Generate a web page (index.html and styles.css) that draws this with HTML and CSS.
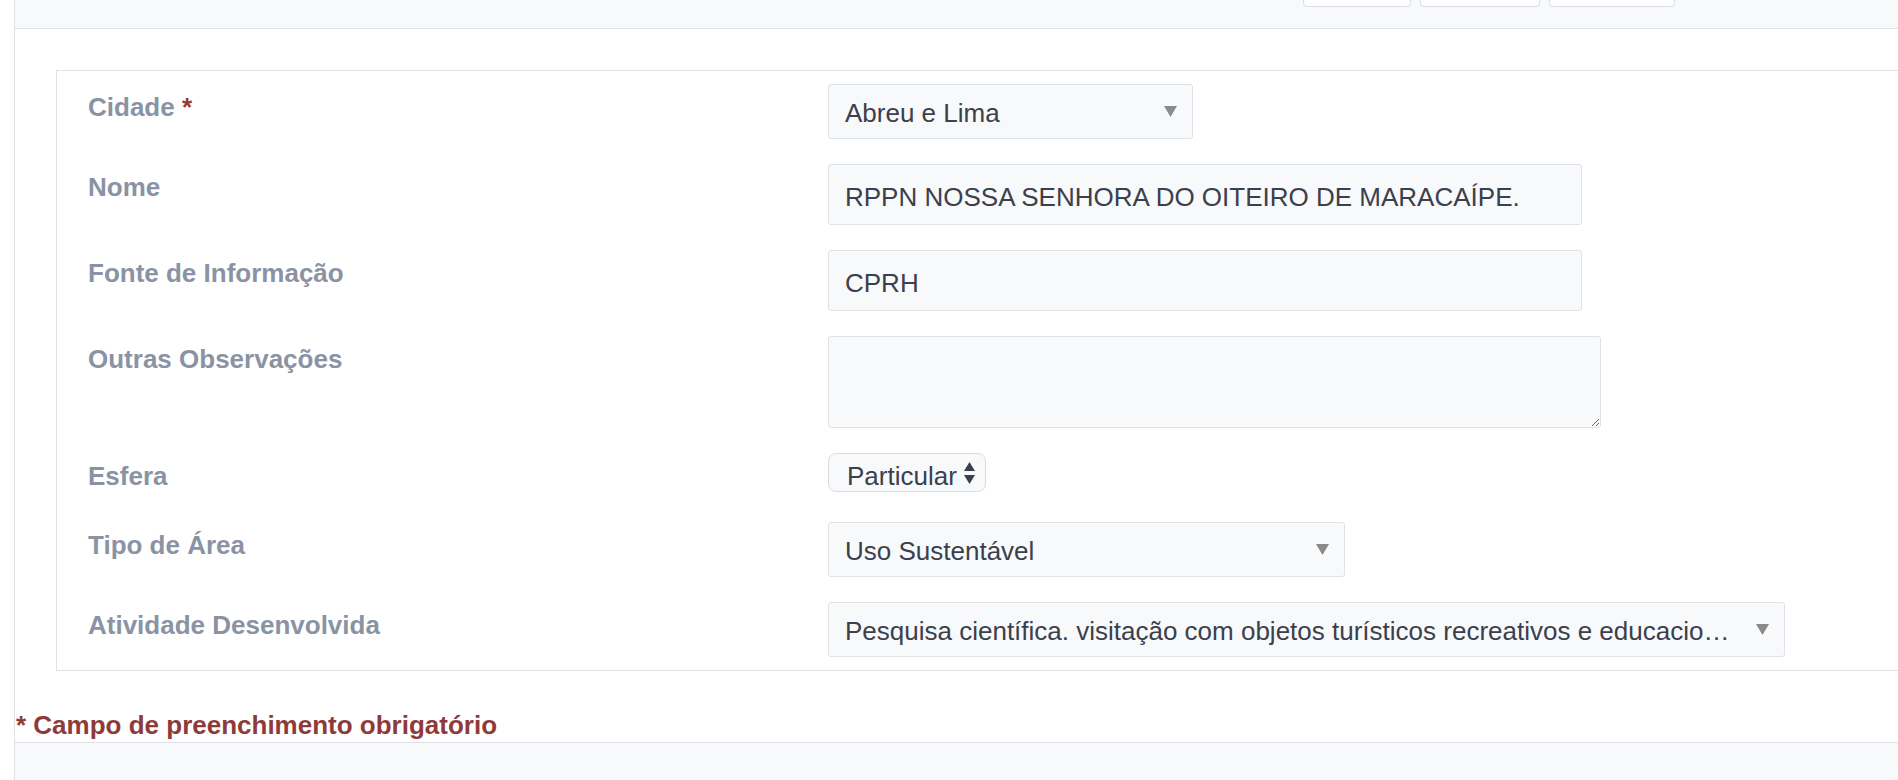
FILE: index.html
```html
<!DOCTYPE html>
<html lang="pt-BR">
<head>
<meta charset="utf-8">
<title>Unidade de Conservação</title>
<link rel="stylesheet" href="styles.css">
</head>
<body>
<div class="page">
  <div class="toolbar">
    <button type="button" class="tb-btn tb-btn--a"></button>
    <button type="button" class="tb-btn tb-btn--b"></button>
    <button type="button" class="tb-btn tb-btn--c"></button>
  </div>

  <div class="content">
    <div class="panel">
      <div class="form-grid">
        <label class="lbl">Cidade <span class="req">*</span></label>
        <div class="select w-city">
          <span class="sel-text">Abreu e Lima</span>
          <svg class="caret" width="13" height="11" viewBox="0 0 13 11"><path d="M0 0H13L6.5 11Z" fill="#8b8b8b"/></svg>
        </div>

        <label class="lbl">Nome</label>
        <input class="input w-long" type="text" value="RPPN NOSSA SENHORA DO OITEIRO DE MARACAÍPE.">

        <label class="lbl">Fonte de Informação</label>
        <input class="input w-long" type="text" value="CPRH">

        <label class="lbl">Outras Observações</label>
        <textarea class="textarea"></textarea>

        <label class="lbl">Esfera</label>
        <div class="spinner">
          <span class="spin-text">Particular</span>
          <svg class="updown" width="11" height="22" viewBox="0 0 11 22"><path d="M5.5 0L11 9H0Z" fill="#3b404c"/><path d="M0 13H11L5.5 22Z" fill="#3b404c"/></svg>
        </div>

        <label class="lbl">Tipo de Área</label>
        <div class="select w-type">
          <span class="sel-text">Uso Sustentável</span>
          <svg class="caret" width="13" height="11" viewBox="0 0 13 11"><path d="M0 0H13L6.5 11Z" fill="#8b8b8b"/></svg>
        </div>

        <label class="lbl">Atividade Desenvolvida</label>
        <div class="select w-activity">
          <span class="sel-text">Pesquisa científica. visitação com objetos turísticos recreativos e educacionais</span>
          <svg class="caret" width="13" height="11" viewBox="0 0 13 11"><path d="M0 0H13L6.5 11Z" fill="#8b8b8b"/></svg>
        </div>
      </div>
    </div>
  </div>

  <p class="note">* Campo de preenchimento obrigatório</p>
  <div class="bottom-band"></div>
</div>
</body>
</html>
```

FILE: styles.css
```css
html, body {
  margin: 0;
  height: 100%;
}

body {
  overflow: hidden;
  background: #ffffff;
  font-family: "Liberation Sans", Arial, Helvetica, sans-serif;
  font-size: 26px;
  color: #3b404c;
}

.page {
  margin-left: 14px;
  width: 2100px;
  height: 780px;
  border-left: 1px solid #dde1e6;
  display: flex;
  flex-direction: column;
}

/* top toolbar (buttons cut off by the viewport top) */
.toolbar {
  flex: none;
  height: 29px;
  box-sizing: border-box;
  background: #f8f9fa;
  border-bottom: 1px solid #dfe2e6;
  display: flex;
  align-items: flex-end;
  gap: 9px;
  padding: 0 0 21px 1288px;
}

.tb-btn {
  flex: none;
  height: 40px;
  padding: 0;
  margin: 0;
  background: #ffffff;
  border: 1px solid #d9dce1;
  border-radius: 4px;
  box-sizing: border-box;
}

.tb-btn--a { width: 108px; }
.tb-btn--b { width: 120px; }
.tb-btn--c { width: 126px; }

/* content */
.content {
  flex: none;
  padding: 41px 0 0 41px;
}

.panel {
  border: 1px solid #dfe2e6;
  padding: 13px 0 13px 31px;
}

.form-grid {
  display: grid;
  grid-template-columns: 740px auto;
  row-gap: 25px;
  align-items: start;
  justify-items: start;
}

.lbl {
  font-weight: bold;
  color: #8a93a4;
  line-height: 30px;
  padding: 8px 0 6px;
  white-space: nowrap;
}

.req {
  color: #933a3a;
}

/* fake select boxes */
.select {
  display: flex;
  align-items: center;
  gap: 22px;
  height: 55px;
  box-sizing: border-box;
  padding: 3px 15px 0 16px;
  border: 1px solid #dfe2e7;
  border-radius: 3px;
  background: #f8f9fb;
  color: #3b404c;
}

.sel-text {
  flex: 1;
  min-width: 0;
  white-space: nowrap;
  overflow: hidden;
  text-overflow: ellipsis;
}

.caret {
  flex: none;
  margin-top: -3px;
}

.w-city { width: 365px; }
.w-type { width: 517px; }
.w-activity { width: 957px; }

/* text inputs */
.input {
  display: block;
  margin: 0;
  height: 61px;
  box-sizing: border-box;
  padding: 5px 16px 0;
  border: 1px solid #dfe2e7;
  border-radius: 3px;
  background: #f8f9fb;
  font: inherit;
  color: #3b404c;
  outline: none;
}

.w-long { width: 754px; }

.textarea {
  display: block;
  margin: 0;
  width: 773px;
  height: 92px;
  box-sizing: border-box;
  padding: 8px 16px;
  border: 1px solid #dfe2e7;
  border-radius: 3px;
  background: #f8f9fb;
  font: inherit;
  color: #3b404c;
  outline: none;
}

/* native-looking small select */
.spinner {
  display: inline-flex;
  align-items: center;
  gap: 7px;
  height: 39px;
  box-sizing: border-box;
  padding: 0 10px 0 18px;
  border: 1px solid #d9dde3;
  border-radius: 8px;
  background: #f8f9fb;
  color: #3b404c;
}

.spin-text {
  line-height: 30px;
  margin-top: 7px;
  white-space: nowrap;
}

.updown {
  flex: none;
}

/* footer */
.note {
  flex: none;
  margin: 39px 0 2px;
  padding-left: 1px;
  font-weight: bold;
  color: #8f3a3a;
  line-height: 30px;
}

.bottom-band {
  flex: 1;
  background: #f8f9fa;
  border-top: 1px solid #dfe2e6;
}
```
